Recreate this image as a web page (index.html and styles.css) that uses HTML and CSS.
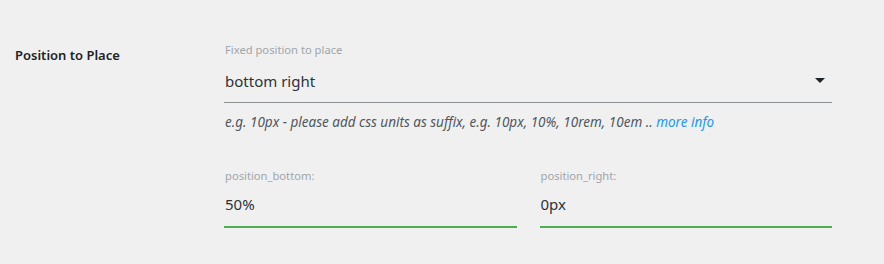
FILE: index.html
```html
<!DOCTYPE html>
<html>
<head>
<meta charset="utf-8">
<link rel="stylesheet" href="styles.css">
</head>
<body>
<div class="row">
  <div class="row-label">Position to Place</div>
  <div class="row-field">
    <div class="field">
      <div class="field-label">Fixed position to place</div>
      <div class="select">
        <span class="select-value">bottom right</span>
        <svg class="caret" width="10" height="5" viewBox="0 0 10 5"><path d="M0 0 H10 L5 5 Z" fill="#1d2327"/></svg>
      </div>
    </div>
    <p class="help">e.g. 10px - please add css units as suffix, e.g. 10px, 10%, 10rem, 10em .. <a href="#" class="more">more info</a></p>
    <div class="pair">
      <div class="field">
        <div class="field-label">position_bottom:</div>
        <div class="input">50%</div>
      </div>
      <div class="field">
        <div class="field-label">position_right:</div>
        <div class="input">0px</div>
      </div>
    </div>
  </div>
</div>
</body>
</html>
```
FILE: styles.css
```css
html, body {
  margin: 0;
  padding: 0;
  background: #f0f0f1;
  width: 884px;
  height: 264px;
  overflow: hidden;
  font-family: "Noto Sans", "Open Sans", sans-serif;
}
.row {
  display: flex;
  padding-top: 42px;
}
.row-label {
  width: 224px;
  padding-left: 15px;
  padding-top: 4px;
  box-sizing: border-box;
  font-size: 13px;
  font-weight: 600;
  color: #1d2327;
  line-height: 18px;
}
.row-field {
  width: 608px;
}
.field-label {
  font-size: 11.2px;
  line-height: 16px;
  color: #a0a5aa;
  padding-left: 1px;
}
.select {
  display: flex;
  align-items: center;
  justify-content: space-between;
  height: 42px;
  border-bottom: 1px solid #8c8f94;
  padding-left: 1px;
  padding-right: 7px;
  margin-top: 2px;
}
.select-value {
  font-size: 15px;
  color: #2c3338;
}
.caret {
  display: block;
  margin-top: -2px;
}
.help {
  margin: 0;
  padding-top: 10px;
  padding-left: 1px;
  font-size: 13.5px;
  line-height: 18px;
  font-style: italic;
  color: #50575e;
}
.more {
  color: #2196f3;
  text-decoration: none;
}
.pair {
  display: flex;
  gap: 23px;
  margin-top: 37px;
}
.pair .field {
  flex: 1;
}
.input {
  font-size: 15px;
  color: #2c3338;
  height: 37px;
  line-height: 37px;
  padding-bottom: 3px;
  border-bottom: 2px solid #4caf50;
  margin-top: 2px;
  padding-left: 1px;
}
```
